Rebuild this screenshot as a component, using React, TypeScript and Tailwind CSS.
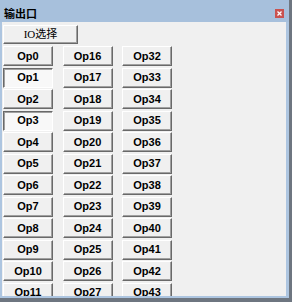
const FONT = "font-['Liberation_Sans',Arial,sans-serif]"

interface OpButtonProps {
  label: string
  pressed?: boolean
}

function OpButton({ label, pressed }: OpButtonProps) {
  return (
    <button
      className={
        pressed
          ? `h-[20px] w-[50px] flex items-center justify-center border border-t-[#696969] border-l-[#696969] border-b-white border-r-white bg-[#f8f8f8] shadow-[inset_1px_1px_0_#a0a0a0] text-[11px] font-bold text-black leading-none ${FONT}`
          : `h-[20px] w-[50px] flex items-center justify-center border border-t-white border-l-white border-b-[#696969] border-r-[#696969] bg-[#f0f0f0] shadow-[inset_-1px_-1px_0_#a0a0a0] text-[11px] font-bold text-black leading-none ${FONT}`
      }
    >
      {label}
    </button>
  )
}

export default function App() {
  const rows = Array.from({ length: 12 }, (_, i) => i)

  return (
    <div className="w-[292px] h-[302px] flex flex-col bg-[#adc5e0] border-r-[3px] border-b-[4px] border-[#6e7680] overflow-hidden">
      <div className="h-[22px] shrink-0 flex items-start bg-[#a7c0dc]">
        <span className="pl-[4px] pt-[7px] leading-[12px] text-[11px] font-bold text-black font-['Noto_Sans_CJK_SC',sans-serif]">
          输出口
        </span>
        <div className="ml-auto mr-[5px] mt-[9px] w-[9px] h-[9px] bg-[#c9524f] flex items-center justify-center">
          <svg width="5" height="5" viewBox="0 0 5 5">
            <path d="M0.5 0.5L4.5 4.5M4.5 0.5L0.5 4.5" stroke="white" strokeWidth="1.3" />
          </svg>
        </div>
      </div>

      <div className="flex-1 ml-[2px] mr-[3px] mb-[2px] bg-[#f0f0f0] overflow-hidden pl-[1px] pt-[3px] flex flex-col gap-[2px]">
        <button className="h-[19px] w-[75px] shrink-0 flex items-center justify-center border border-t-white border-l-white border-b-[#696969] border-r-[#696969] bg-[#f0f0f0] shadow-[inset_-1px_-1px_0_#a0a0a0] text-[11px] text-black leading-none font-['Liberation_Serif','Noto_Sans_CJK_SC',serif]">
          IO选择
        </button>
        <div className="grid grid-cols-[50px_50px_50px] gap-x-[9.5px] gap-y-[1.5px]">
          {rows.map((r) => (
            <div key={r} className="contents">
              <OpButton label={`Op${r}`} pressed={r === 1 || r === 3} />
              <OpButton label={`Op${r + 16}`} />
              <OpButton label={`Op${r + 32}`} />
            </div>
          ))}
        </div>
      </div>
    </div>
  )
}
